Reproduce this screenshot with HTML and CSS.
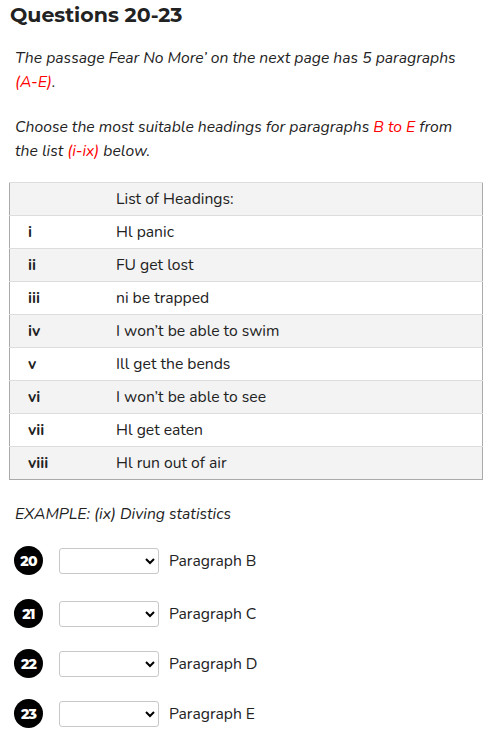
FILE: index.html
```
<!DOCTYPE html>
<html lang="en">
<head>
<meta charset="utf-8">
<title>Questions 20-23</title>
<link rel="stylesheet" href="styles.css">
</head>
<body>
<main class="page">
  <h2 class="title">Questions 20-23</h2>
  <p class="intro"><em>The passage Fear No More’ on the next page has 5 paragraphs <span class="hl">(A-E)</span>.</em></p>
  <p class="intro"><em>Choose the most suitable headings for paragraphs <span class="hl">B to E</span> from the list <span class="hl">(i-ix)</span> below.</em></p>
  <table class="headings">
    <thead>
      <tr><th class="num-col"></th><th>List of Headings:</th></tr>
    </thead>
    <tbody>
      <tr><td class="num-col">i</td><td>Hl panic</td></tr>
      <tr><td class="num-col">ii</td><td>FU get lost</td></tr>
      <tr><td class="num-col">iii</td><td>ni be trapped</td></tr>
      <tr><td class="num-col">iv</td><td>I won’t be able to swim</td></tr>
      <tr><td class="num-col">v</td><td>Ill get the bends</td></tr>
      <tr><td class="num-col">vi</td><td>I won’t be able to see</td></tr>
      <tr><td class="num-col">vii</td><td>Hl get eaten</td></tr>
      <tr><td class="num-col">viii</td><td>Hl run out of air</td></tr>
    </tbody>
  </table>
  <p class="example"><em>EXAMPLE: (ix) Diving statistics</em></p>
  <ol class="answers">
    <li class="answer"><span class="qnum">20</span><select class="pick"><option></option></select><span class="label">Paragraph B</span></li>
    <li class="answer"><span class="qnum">21</span><select class="pick"><option></option></select><span class="label">Paragraph C</span></li>
    <li class="answer"><span class="qnum">22</span><select class="pick"><option></option></select><span class="label">Paragraph D</span></li>
    <li class="answer"><span class="qnum">23</span><select class="pick"><option></option></select><span class="label">Paragraph E</span></li>
  </ol>
</main>
</body>
</html>
```
FILE: styles.css
```
html, body {
  margin: 0;
  padding: 0;
  background: #fff;
}
body {
  font-family: "Nunito", "Lato", "Noto Sans", sans-serif;
  font-size: 15.7px;
  color: #222;
}
.page {
  padding: 0 5px 0 9px;
}
.title {
  font-family: "Montserrat", "Noto Sans", sans-serif;
  font-weight: 700;
  font-size: 20.5px;
  line-height: 30px;
  margin: 0 0 0 1px;
  color: #222;
}
.intro {
  margin: 16px 13px 0 6px;
  line-height: 24px;
}
.intro + .intro {
  margin-top: 21px;
}
.hl {
  color: #f00;
  white-space: nowrap;
}
.headings {
  margin-top: 19px;
  width: 474px;
  border-collapse: collapse;
  border: 1px solid #aaa;
}
.headings th,
.headings td {
  text-align: left;
  font-weight: 400;
  height: 32px;
  padding: 0;
  border-top: 1px solid #ddd;
}
.headings .num-col {
  width: 88px;
  padding-left: 18px;
  font-weight: 700;
}
.headings tr:nth-child(odd) th,
.headings tbody tr:nth-child(even) td {
  background: #f3f3f3;
}
.example {
  margin: 22px 0 0 6px;
  line-height: 24px;
}
.answers {
  list-style: none;
  margin: 20px 0 0 0;
  padding: 0 0 0 5px;
  display: flex;
  flex-direction: column;
  gap: 21px;
}
.answer {
  display: flex;
  align-items: center;
  height: 29px;
}
.answers .answer:first-child {
  margin-bottom: 3px;
}
.qnum {
  width: 29px;
  height: 29px;
  border-radius: 50%;
  background: #000;
  color: #fff;
  font-family: "Montserrat", "Noto Sans", sans-serif;
  font-weight: 800;
  font-size: 14px;
  display: flex;
  align-items: center;
  justify-content: center;
  letter-spacing: -0.8px;
}
.pick {
  margin-left: 16px;
  width: 100px;
  height: 26px;
  border: 1px solid #c8c8c8;
  border-radius: 3px;
  background: #fff;
  font: inherit;
}
.label {
  margin-left: 10px;
}
```
